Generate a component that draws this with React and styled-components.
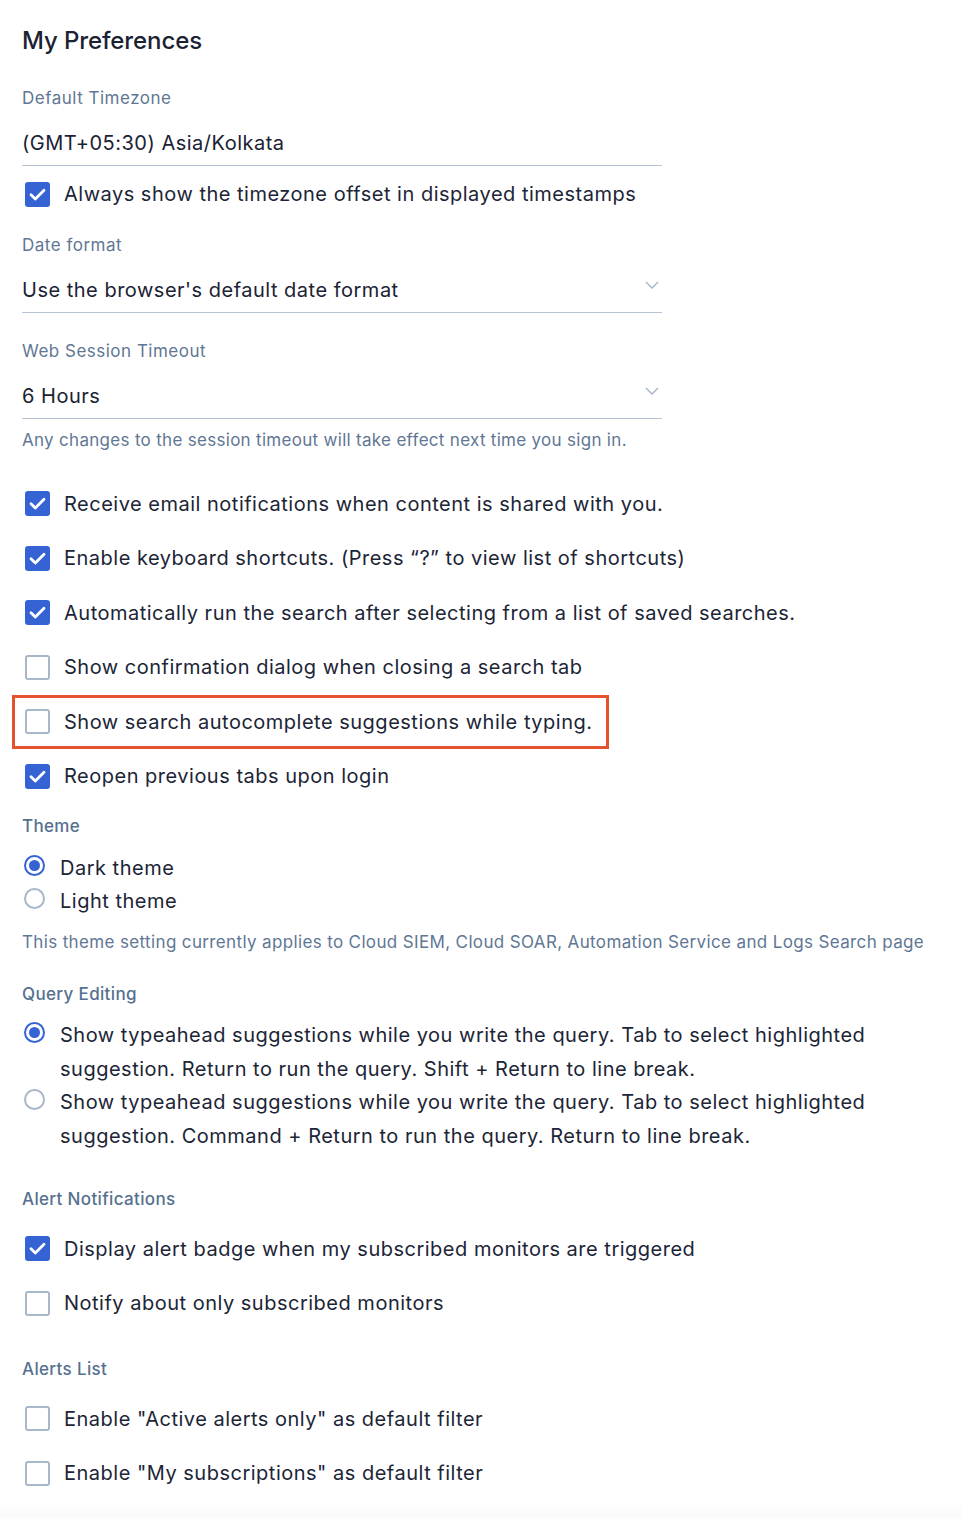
import React from "react";
import styled, { createGlobalStyle, css } from "styled-components";

const Global = createGlobalStyle`
  html, body { margin: 0; padding: 0; background: #fff; }
  body { font-family: Inter, "Noto Sans", sans-serif; color: #1c2536; }
`;

const Page = styled.div`
  width: 962px;
  min-height: 1518px;
  box-sizing: border-box;
  padding: 26px 22px 0 22px;
  display: flex;
  flex-direction: column;
`;

const Title = styled.h1`
  margin: 0;
  font-size: 24px;
  line-height: 30px;
  font-weight: 500;
  color: #1a2233;
  letter-spacing: -0.1px;
`;

const Label = styled.div`
  font-size: 17px;
  line-height: 24px;
  color: ${(p) => (p.$strong ? "#56708f" : "#5f7794")};
  font-weight: ${(p) => (p.$strong ? 500 : 400)};
  letter-spacing: ${(p) => (p.$strong ? "0.35px" : "0.5px")};
  margin-top: ${(p) => p.$mt || 0}px;
`;

const Help = styled.div`
  font-size: 17px;
  line-height: 24px;
  color: #5f7794;
  margin-top: ${(p) => p.$mt || 0}px;
  letter-spacing: ${(p) => p.$ls || "0.3px"};
  white-space: nowrap;
`;

const Field = styled.div`
  width: 640px;
  margin-top: 19px;
  display: flex;
  align-items: center;
  justify-content: space-between;
  padding-bottom: 8px;
  border-bottom: 1px solid #b4c2d3;
  font-size: 20px;
  line-height: 28px;
  color: #1a2233;
  letter-spacing: 0.5px;
`;

const Chevron = styled.svg`
  width: 14px;
  height: 8px;
  margin-right: 3px;
  margin-top: -10px;
  flex: none;
`;

const CheckRow = styled.label`
  display: flex;
  align-items: center;
  width: fit-content;
  box-sizing: border-box;
  height: 54.5px;
  margin-left: -10px;
  padding: 0 13px 0 10px;
  border: 3px solid ${(p) => (p.$highlight ? "#e4522e" : "transparent")};
  margin-top: ${(p) => p.$mt || 0}px;
  font-size: 20px;
  color: #1c2536;
  white-space: nowrap;
  letter-spacing: 0.5px;
`;

const Box = styled.span`
  width: 25px;
  height: 25px;
  box-sizing: border-box;
  border-radius: 3px;
  flex: none;
  margin-right: 14px;
  display: flex;
  align-items: center;
  justify-content: center;
  ${(p) =>
    p.$checked
      ? css`
          background: #3563d4;
        `
      : css`
          background: #fff;
          border: 2.5px solid #a8b7ca;
        `}
`;

const RadioGroup = styled.div`
  display: flex;
  flex-direction: column;
  margin-top: ${(p) => p.$mt || 0}px;
`;

const RadioRow = styled.label`
  display: flex;
  align-items: flex-start;
  font-size: 20px;
  line-height: 33.7px;
  color: #1c2536;
  letter-spacing: 0.5px;
`;

const Circle = styled.span`
  width: 21px;
  height: 21px;
  box-sizing: border-box;
  border-radius: 50%;
  flex: none;
  margin: 3px 15px 0 2px;
  border: 2px solid ${(p) => (p.$checked ? "#3563d4" : "#a8b7ca")};
  display: flex;
  align-items: center;
  justify-content: center;
  &::after {
    content: "";
    width: 11px;
    height: 11px;
    border-radius: 50%;
    background: ${(p) => (p.$checked ? "#3563d4" : "transparent")};
  }
`;

const RadioText = styled.span`
  max-width: 830px;
`;

const Fade = styled.div`
  margin-top: auto;
  height: 30px;
  margin-left: -22px;
  margin-right: -22px;
  background: linear-gradient(#ffffff, #f6f6f6);
`;

function Check({ checked, children, highlight, mt }) {
  return (
    <CheckRow $highlight={highlight} $mt={mt}>
      <Box $checked={checked}>
        {checked && (
          <svg width="17" height="13" viewBox="0 0 17 13">
            <path
              d="M2 6.8 L6.3 11 L15 2.2"
              fill="none"
              stroke="#fff"
              strokeWidth="2.8"
              strokeLinecap="round"
              strokeLinejoin="round"
            />
          </svg>
        )}
      </Box>
      <span>{children}</span>
    </CheckRow>
  );
}

function Radio({ checked, children }) {
  return (
    <RadioRow>
      <Circle $checked={checked} />
      <RadioText>{children}</RadioText>
    </RadioRow>
  );
}

function Select({ value, chevron }) {
  return (
    <Field>
      <span>{value}</span>
      {chevron && (
        <Chevron viewBox="0 0 14 8">
          <path d="M1 1 L7 7 L13 1" fill="none" stroke="#a3b2c5" strokeWidth="1.3" />
        </Chevron>
      )}
    </Field>
  );
}

export default function App() {
  return (
    <>
      <Global />
      <Page>
        <Title>My Preferences</Title>
        <Label $mt={30}>Default Timezone</Label>
        <Select value="(GMT+05:30) Asia/Kolkata" />
        <Check checked mt={1}>Always show the timezone offset in displayed timestamps</Check>
        <Label $mt={11}>Date format</Label>
        <Select value="Use the browser's default date format" chevron />
        <Label $mt={26}>Web Session Timeout</Label>
        <Select value="6 Hours" chevron />
        <Help $mt={9}>Any changes to the session timeout will take effect next time you sign in.</Help>

        <Check checked mt={25}>Receive email notifications when content is shared with you.</Check>
        <Check checked>Enable keyboard shortcuts. (Press “?” to view list of shortcuts)</Check>
        <Check checked>Automatically run the search after selecting from a list of saved searches.</Check>
        <Check>Show confirmation dialog when closing a search tab</Check>
        <Check highlight>Show search autocomplete suggestions while typing.</Check>
        <Check checked>Reopen previous tabs upon login</Check>

        <Label $strong $mt={10}>Theme</Label>
        <RadioGroup $mt={14}>
          <Radio checked>Dark theme</Radio>
          <Radio>Light theme</Radio>
        </RadioGroup>
        <Help $mt={11} $ls="0.36px">
          This theme setting currently applies to Cloud SIEM, Cloud SOAR, Automation Service and Logs Search page
        </Help>

        <Label $strong $mt={28}>Query Editing</Label>
        <RadioGroup $mt={13}>
          <Radio checked>
            Show typeahead suggestions while you write the query. Tab to select highlighted suggestion. Return to run
            the query. Shift + Return to line break.
          </Radio>
          <Radio>
            Show typeahead suggestions while you write the query. Tab to select highlighted suggestion. Command +
            Return to run the query. Return to line break.
          </Radio>
        </RadioGroup>

        <Label $strong $mt={33}>Alert Notifications</Label>
        <Check checked mt={11}>Display alert badge when my subscribed monitors are triggered</Check>
        <Check>Notify about only subscribed monitors</Check>

        <Label $strong $mt={26}>Alerts List</Label>
        <Check mt={11}>Enable "Active alerts only" as default filter</Check>
        <Check>Enable "My subscriptions" as default filter</Check>
        <Fade />
      </Page>
    </>
  );
}
